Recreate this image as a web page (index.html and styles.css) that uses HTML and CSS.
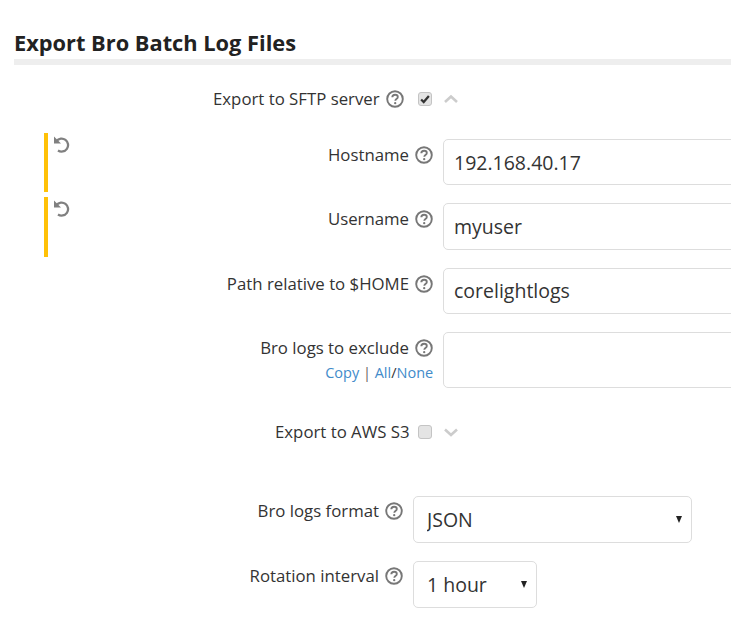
FILE: index.html
```html
<!DOCTYPE html>
<html lang="en">
  <head>
    <meta charset="UTF-8" />
    <title>Export Bro Batch Log Files</title>
    <link rel="stylesheet" href="styles.css">
  </head>
  <body>
    <div class="page">
      <h2 class="section-title">Export Bro Batch Log Files</h2>

      <div class="toggle-row toggle-sftp">
        <label class="field-label">Export to SFTP server</label>
        <svg class="help" viewBox="0 0 18 18"><circle cx="9" cy="9" r="7.800"/><path d="M6.300 7.300c0-1.700 1.200-2.600 2.800-2.600s2.700.9 2.700 2.300c0 1.100-.7 1.600-1.400 2.100-.7.500-1.100.8-1.100 1.700"/><circle class="dot" cx="9.200" cy="13.200" r="1.150"/></svg>
        <span class="check is-checked"><svg viewBox="0 0 14 14"><path d="M2.500 7.500l3 3L11.500 3.500"/></svg></span>
        <svg class="chevron" viewBox="0 0 16 10"><path d="M2 8l6-5.500L14 8"/></svg>
      </div>

      <!-- sftp settings -->
      <div class="field modified">
        <svg class="revert" viewBox="0 0 18 18"><path class="head" d="M2 1.500v7h7z"/><path d="M4.500 6A6.500 6.500 0 1 1 6 15.500"/></svg>
        <label class="field-label">Hostname</label>
        <svg class="help" viewBox="0 0 18 18"><circle cx="9" cy="9" r="7.800"/><path d="M6.300 7.300c0-1.700 1.200-2.600 2.800-2.600s2.700.9 2.700 2.300c0 1.100-.7 1.600-1.400 2.100-.7.500-1.100.8-1.100 1.700"/><circle class="dot" cx="9.200" cy="13.200" r="1.150"/></svg>
        <input class="text-input" type="text" value="192.168.40.17" />
      </div>
      <div class="field modified">
        <svg class="revert" viewBox="0 0 18 18"><path class="head" d="M2 1.500v7h7z"/><path d="M4.500 6A6.500 6.500 0 1 1 6 15.500"/></svg>
        <label class="field-label">Username</label>
        <svg class="help" viewBox="0 0 18 18"><circle cx="9" cy="9" r="7.800"/><path d="M6.300 7.300c0-1.700 1.200-2.600 2.800-2.600s2.700.9 2.700 2.300c0 1.100-.7 1.600-1.400 2.100-.7.500-1.100.8-1.100 1.700"/><circle class="dot" cx="9.200" cy="13.200" r="1.150"/></svg>
        <input class="text-input" type="text" value="myuser" />
      </div>
      <div class="field">
        <label class="field-label">Path relative to $HOME</label>
        <svg class="help" viewBox="0 0 18 18"><circle cx="9" cy="9" r="7.800"/><path d="M6.300 7.300c0-1.700 1.200-2.600 2.800-2.600s2.700.9 2.700 2.300c0 1.100-.7 1.600-1.400 2.100-.7.500-1.100.8-1.100 1.700"/><circle class="dot" cx="9.200" cy="13.200" r="1.150"/></svg>
        <input class="text-input" type="text" value="corelightlogs" />
      </div>
      <div class="field field-tall">
        <div class="label-stack">
          <div class="label-line">
            <label class="field-label">Bro logs to exclude</label>
            <svg class="help" viewBox="0 0 18 18"><circle cx="9" cy="9" r="7.800"/><path d="M6.300 7.300c0-1.700 1.200-2.600 2.800-2.600s2.700.9 2.700 2.300c0 1.100-.7 1.600-1.400 2.100-.7.500-1.100.8-1.100 1.700"/><circle class="dot" cx="9.200" cy="13.200" r="1.150"/></svg>
          </div>
          <div class="label-links"><a href="#">Copy</a> <span class="sep">|</span> <a href="#">All</a>/<a href="#">None</a></div>
        </div>
        <textarea class="text-input text-area"></textarea>
      </div>

      <div class="toggle-row toggle-s3">
        <label class="field-label">Export to AWS S3</label>
        <span class="check"></span>
        <svg class="chevron" viewBox="0 0 16 10"><path d="M2 2.500L8 8l6-5.500"/></svg>
      </div>

      <div class="select-row select-format">
        <label class="field-label">Bro logs format</label>
        <svg class="help" viewBox="0 0 18 18"><circle cx="9" cy="9" r="7.800"/><path d="M6.300 7.300c0-1.700 1.200-2.600 2.800-2.600s2.700.9 2.700 2.300c0 1.100-.7 1.600-1.400 2.100-.7.500-1.100.8-1.100 1.700"/><circle class="dot" cx="9.200" cy="13.200" r="1.150"/></svg>
        <div class="select-wrap wide">
          <select class="select-input"><option>JSON</option></select>
        </div>
      </div>
      <div class="select-row">
        <label class="field-label">Rotation interval</label>
        <svg class="help" viewBox="0 0 18 18"><circle cx="9" cy="9" r="7.800"/><path d="M6.300 7.300c0-1.700 1.200-2.600 2.800-2.600s2.700.9 2.700 2.300c0 1.100-.7 1.600-1.400 2.100-.7.500-1.100.8-1.100 1.700"/><circle class="dot" cx="9.200" cy="13.200" r="1.150"/></svg>
        <div class="select-wrap narrow">
          <select class="select-input"><option>1 hour</option></select>
        </div>
      </div>
    </div>
  </body>
</html>
```

FILE: styles.css
```css
html,
body {
  margin: 0;
  background-color: #fff;
}

body {
  font-family: "Open Sans", sans-serif;
  color: #333;
}

.page {
  width: 731px;
  height: 632px;
  overflow: hidden;
  padding: 30px 0 0 14px;
  box-sizing: border-box;
}

.section-title {
  margin: 0;
  padding-bottom: 3px;
  font-size: 21.800px;
  line-height: 26px;
  font-weight: 700;
  color: #222;
  border-bottom: 6px solid #eee;
}

.field-label {
  font-size: 16.800px;
  line-height: 22px;
  white-space: nowrap;
}

/* help icon */
.help {
  width: 18px;
  height: 18px;
  flex: none;
  margin-left: 6.200px;
  fill: none;
  stroke: #777;
  stroke-width: 1.900;
}

.help .dot {
  fill: #777;
  stroke: none;
}

/* checkbox rows */
.toggle-row {
  display: flex;
  align-items: center;
  height: 24px;
}

.toggle-sftp {
  margin-top: 22px;
  padding-left: 199px;
}

.toggle-s3 {
  margin-top: 26px;
  padding-left: 261px;
}

.check {
  width: 14px;
  height: 14px;
  flex: none;
  margin-left: 14.300px;
  box-sizing: border-box;
  background-color: #e4e4e4;
  border: 1px solid #c4c4c4;
  border-radius: 3px;
}

.toggle-s3 .check {
  margin-left: 8.300px;
}

.check svg {
  display: block;
  width: 12px;
  height: 12px;
  fill: none;
  stroke: #333;
  stroke-width: 2.600;
}

.chevron {
  width: 16px;
  height: 10px;
  flex: none;
  margin-left: 11px;
  fill: none;
  stroke: #ccc;
  stroke-width: 2.600;
}

/* text fields */
.field {
  position: relative;
  display: flex;
  align-items: flex-start;
  justify-content: flex-end;
  box-sizing: border-box;
  height: 59.330px;
  margin-left: 30px;
  width: 687px;
  margin-bottom: 5px;
  padding-top: 6px;
}

.toggle-sftp + .field {
  margin-top: 22px;
}

.field.modified {
  border-left: 4px solid #ffc107;
}

.field > .field-label {
  margin-top: 5px;
}

.field > .help {
  margin-top: 7px;
}

.revert {
  position: absolute;
  top: 2px;
  left: 4px;
  width: 18px;
  height: 18px;
  fill: none;
  stroke: #808080;
  stroke-width: 2.300;
}

.revert .head {
  fill: #808080;
  stroke: none;
}

.text-input {
  display: block;
  width: 320px;
  height: 46.330px;
  flex: none;
  margin-left: 9.800px;
  margin-right: -32px;
  padding: 0 10px;
  box-sizing: border-box;
  font-family: "Open Sans", sans-serif;
  font-size: 19.500px;
  color: #333;
  background-color: #fff;
  border: 1px solid #ddd;
  border-radius: 5px;
  outline: none;
}

.field-tall {
  height: 68px;
}

.text-area {
  height: 56px;
  resize: none;
}

.label-stack {
  margin-top: 5px;
  text-align: right;
}

.label-line {
  display: flex;
  align-items: center;
  justify-content: flex-end;
}

.label-links {
  padding-top: 4px;
  font-size: 14.500px;
  line-height: 19px;
}

.label-links a {
  color: #428bca;
  text-decoration: none;
}

.label-links .sep {
  color: #666;
}

/* select rows */
.select-row {
  display: flex;
  align-items: flex-start;
  justify-content: flex-start;
  margin-bottom: 18px;
}

.select-row .field-label {
  width: 365px;
  margin-top: 4px;
  text-align: right;
}

.select-row .help {
  margin-top: 6px;
}

.select-format {
  margin-top: 52px;
}

.select-wrap {
  position: relative;
  height: 47px;
  margin-left: 9.800px;
}

.select-wrap.wide {
  width: 279px;
}

.select-wrap.narrow {
  width: 124px;
}

.select-wrap::after {
  content: "";
  position: absolute;
  top: 20px;
  right: 10px;
  border-left: 3.500px solid transparent;
  border-right: 3.500px solid transparent;
  border-top: 7px solid #222;
}

.select-input {
  appearance: none;
  display: block;
  width: 100%;
  height: 100%;
  padding: 0 13px;
  box-sizing: border-box;
  font-family: "Open Sans", sans-serif;
  font-size: 19.500px;
  color: #333;
  background-color: #fff;
  border: 1px solid #ddd;
  border-radius: 5px;
  outline: none;
}
```
